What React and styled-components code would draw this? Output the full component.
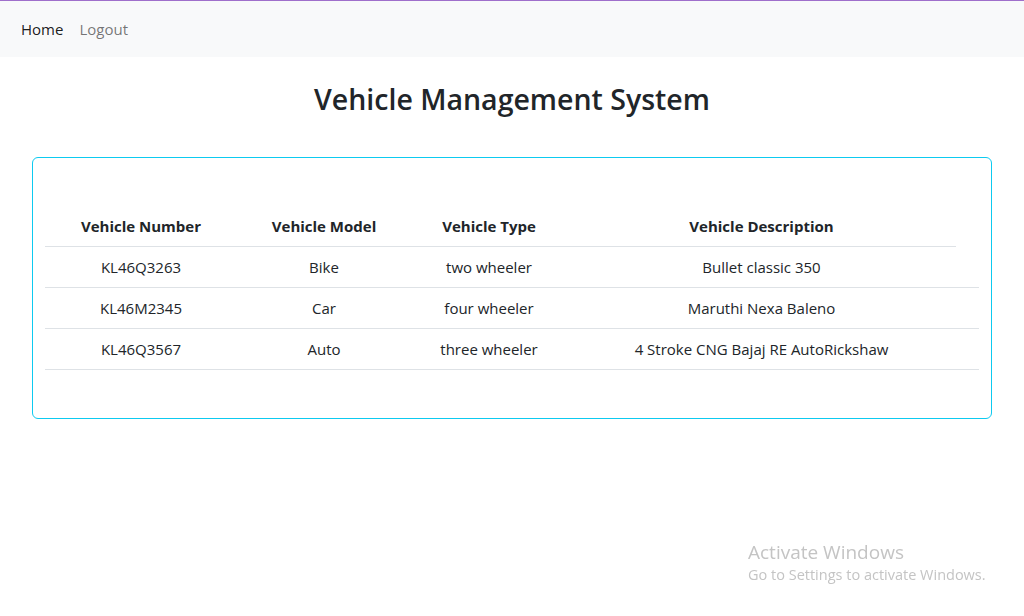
import styled, { createGlobalStyle } from 'styled-components'

const GlobalStyle = createGlobalStyle`
	* { box-sizing: border-box; }
	body {
		margin: 0;
		font-family: "Open Sans", "Noto Sans", sans-serif;
		font-size: 15px;
		line-height: 1.5;
		color: #212529;
		background: #fff;
	}
`

const vehicles = [
	{ number: 'KL46Q3263', model: 'Bike', type: 'two wheeler', description: 'Bullet classic 350' },
	{ number: 'KL46M2345', model: 'Car', type: 'four wheeler', description: 'Maruthi Nexa Baleno' },
	{ number: 'KL46Q3567', model: 'Auto', type: 'three wheeler', description: '4 Stroke CNG Bajaj RE AutoRickshaw' },
]

const columns = [
	{ label: 'Vehicle Number', width: 192 },
	{ label: 'Vehicle Model', width: 174 },
	{ label: 'Vehicle Type', width: 156 },
	{ label: 'Vehicle Description', width: 389 },
]

const Page = styled.div`
	min-height: 100vh;
	border-top: 1px solid #9f6fcb;
`

const Navbar = styled.nav`
	background-color: #f8f9fa;
	height: 56px;
	display: flex;
	align-items: center;
	padding: 0 13px;
`

const NavLink = styled.a`
	padding: 8px;
	line-height: 24px;
	color: ${({ active }) => (active ? 'rgba(0, 0, 0, 0.9)' : 'rgba(0, 0, 0, 0.55)')};
	text-decoration: none;
	cursor: pointer;
`

const Title = styled.h1`
	margin: 25px 0 0;
	text-align: center;
	font-size: 28.5px;
	font-weight: 600;
	line-height: 1.2;
`

const Card = styled.div`
	margin: 41px 32px 0;
	border: 1px solid #0dcaf0;
	border-radius: 6px;
	padding: 48px 12px 48px;
`

const Table = styled.table`
	border-collapse: collapse;
	table-layout: fixed;
	width: 100%;
`

const Th = styled.th`
	padding: 8px;
	line-height: 24px;
	font-weight: 700;
	text-align: center;
	border-bottom: ${({ blank }) => (blank ? 'none' : '1px solid #dee2e6')};
`

const Td = styled.td`
	padding: 8px;
	line-height: 24px;
	text-align: center;
	border-bottom: 1px solid #dee2e6;
`

const Watermark = styled.div`
	position: fixed;
	left: 748px;
	top: 538px;
	color: #c4c4c4;
	font-family: "Open Sans", sans-serif;
	pointer-events: none;
`

const WatermarkTitle = styled.div`
	font-size: 19px;
	line-height: 28px;
`

const WatermarkText = styled.div`
	font-size: 14.5px;
	line-height: 18px;
`

const App = () => {
	return (
		<Page>
			<GlobalStyle />
			<Navbar>
				<NavLink active>Home</NavLink>
				<NavLink>Logout</NavLink>
			</Navbar>
			<Title>Vehicle Management System</Title>
			<Card>
				<Table>
					<colgroup>
						{columns.map((c) => (
							<col key={c.label} style={{ width: c.width }} />
						))}
						<col />
					</colgroup>
					<thead>
						<tr>
							{columns.map((c) => (
								<Th key={c.label}>{c.label}</Th>
							))}
							<Th blank />
						</tr>
					</thead>
					<tbody>
						{vehicles.map((v) => (
							<tr key={v.number}>
								<Td>{v.number}</Td>
								<Td>{v.model}</Td>
								<Td>{v.type}</Td>
								<Td>{v.description}</Td>
								<Td />
							</tr>
						))}
					</tbody>
				</Table>
			</Card>
			<Watermark>
				<WatermarkTitle>Activate Windows</WatermarkTitle>
				<WatermarkText>Go to Settings to activate Windows.</WatermarkText>
			</Watermark>
		</Page>
	)
}

export default App
